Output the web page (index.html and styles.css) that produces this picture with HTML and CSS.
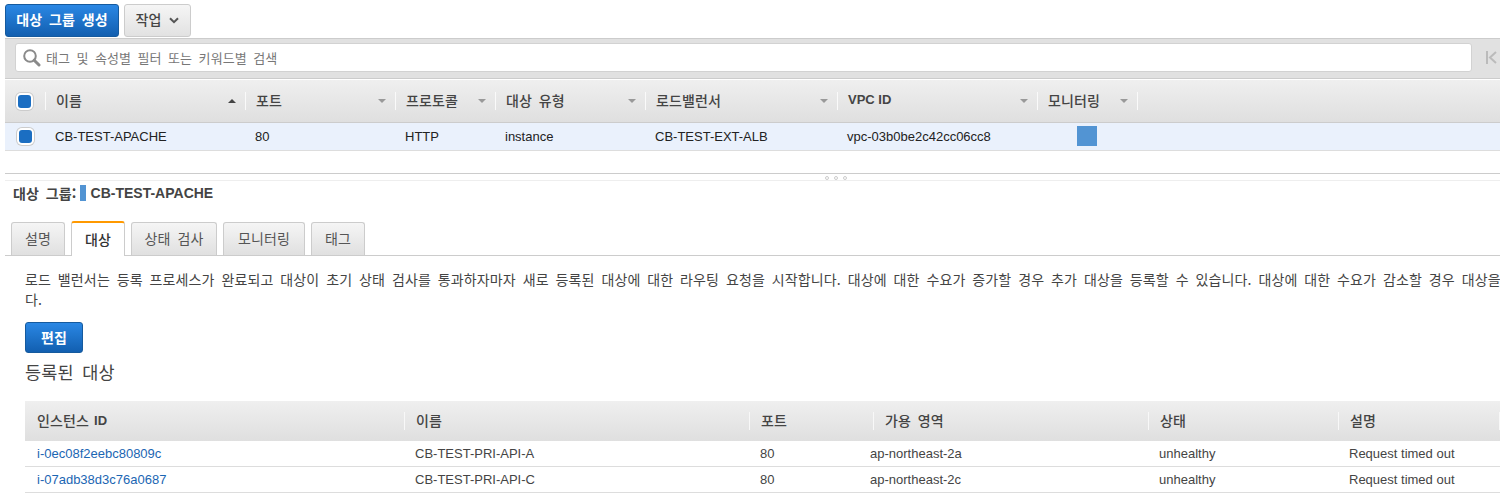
FILE: index.html
```html
<!DOCTYPE html>
<html lang="ko">
<head>
<meta charset="utf-8">
<title>대상 그룹</title>
<link rel="stylesheet" href="styles.css">
</head>
<body>
<div class="toolbar">
  <button class="btn primary create ko">대상 그룹 생성</button>
  <button class="btn secondary ko">작업 <svg class="chev" width="10" height="7" viewBox="0 0 10 7"><path d="M1 1.2 L5 5.2 L9 1.2" fill="none" stroke="#555" stroke-width="2"/></svg></button>
</div>
<div class="filterbar">
  <div class="search">
    <svg class="mag" width="19" height="19" viewBox="0 0 19 19"><circle cx="8" cy="8" r="5.8" fill="none" stroke="#8a8a8a" stroke-width="2"/><path d="M12.2 12.2 L17 17" stroke="#8a8a8a" stroke-width="3" stroke-linecap="round"/></svg>
    <span class="ko">태그 및 속성별 필터 또는 키워드별 검색</span>
  </div>
  <svg class="first" width="11" height="13" viewBox="0 0 11 13"><path d="M1 0 V13" stroke="#bbb" stroke-width="2"/><path d="M10 1 L4 6.5 L10 12" fill="none" stroke="#bbb" stroke-width="2"/></svg>
</div>
<div class="grid head">
  <div class="cell check"><i class="box"></i></div>
  <div class="cell c1"><span class="ko">이름</span><b class="tri up"></b></div>
  <div class="cell c2"><span class="ko">포트</span><b class="tri"></b></div>
  <div class="cell c3"><span class="ko">프로토콜</span><b class="tri"></b></div>
  <div class="cell c4"><span class="ko">대상 유형</span><b class="tri"></b></div>
  <div class="cell c5"><span class="ko">로드밸런서</span><b class="tri"></b></div>
  <div class="cell c6"><strong>VPC ID</strong><b class="tri"></b></div>
  <div class="cell c7"><span class="ko">모니터링</span><b class="tri"></b></div>
</div>
<div class="grid row">
  <div class="cell check"><i class="box"></i></div>
  <div class="cell c1">CB-TEST-APACHE</div>
  <div class="cell c2">80</div>
  <div class="cell c3">HTTP</div>
  <div class="cell c4">instance</div>
  <div class="cell c5">CB-TEST-EXT-ALB</div>
  <div class="cell c6">vpc-03b0be2c42cc06cc8</div>
  <div class="cell c7"><i class="swatch"></i></div>
</div>
<div class="splitter"><span class="dots"><i></i><i></i><i></i></span></div>
<div class="title"><span class="label ko">대상 그룹:</span><i class="flag"></i><strong>CB-TEST-APACHE</strong></div>
<div class="tabs">
  <div class="tab t1 ko">설명</div>
  <div class="tab active t2 ko">대상</div>
  <div class="tab t3 ko">상태 검사</div>
  <div class="tab t4 ko">모니터링</div>
  <div class="tab t5 ko">태그</div>
</div>
<div class="content">
  <p class="desc ko">로드 밸런서는 등록 프로세스가 완료되고 대상이 초기 상태 검사를 통과하자마자 새로 등록된 대상에 대한 라우팅 요청을 시작합니다. 대상에 대한 수요가 증가할 경우 추가 대상을 등록할 수 있습니다. 대상에 대한 수요가 감소할 경우 대상을 등록 취소할 수 있습니다.</p>
  <button class="btn primary edit ko">편집</button>
  <h2 class="ko">등록된 대상</h2>
  <div class="tgrid thead">
    <div class="th th-first"><span class="ko">인스턴스</span><strong>ID</strong></div><div class="th"><span class="ko">이름</span></div><div class="th"><span class="ko">포트</span></div><div class="th"><span class="ko">가용 영역</span></div><div class="th"><span class="ko">상태</span></div><div class="th"><span class="ko">설명</span></div>
  </div>
  <div class="tgrid tr">
    <div><a href="#">i-0ec08f2eebc80809c</a></div><div>CB-TEST-PRI-API-A</div><div>80</div><div class="az">ap-northeast-2a</div><div>unhealthy</div><div>Request timed out</div>
  </div>
  <div class="tgrid tr">
    <div><a href="#">i-07adb38d3c76a0687</a></div><div>CB-TEST-PRI-API-C</div><div>80</div><div class="az">ap-northeast-2c</div><div>unhealthy</div><div>Request timed out</div>
  </div>
</div>
</body>
</html>
```
FILE: styles.css
```css
* { box-sizing: border-box; }
html, body { margin: 0; padding: 0; width: 1500px; height: 502px; overflow: hidden; background: #fff; }
body { font-family: "Liberation Sans", "Noto Sans CJK KR", sans-serif; font-size: 13px; color: #444; }
.ko { font-family: "Noto Sans CJK KR", "Liberation Sans", sans-serif; font-size: 14px; letter-spacing: .009em; word-spacing: .2em; }

.toolbar { display: flex; gap: 5px; padding: 4px 0 0 5px; height: 38px; }
.btn { border-radius: 3px; padding: 0; cursor: pointer; }
.primary { background: linear-gradient(#2a87e4, #125fb0); border: 1px solid #155a9e; color: #fff; font-weight: bold; }
.secondary { background: linear-gradient(#f5f5f5, #e2e2e2); border: 1px solid #ccc; color: #444; width: 67px; height: 33px; font-weight: 500; padding-bottom: 3px; }
.create { width: 114px; height: 33px; padding-bottom: 3px; }
.chev { margin-left: 1px; vertical-align: 1px; }

.filterbar { margin-left: 5px; height: 41px; background: #e1e1e1; border-top: 1px solid #ccc; border-bottom: 1px solid #ccc; padding: 4px 0 0 10px; display: flex; align-items: flex-start; }
.search { width: 1457px; height: 29px; background: #fff; border: 1px solid #d2d2d2; border-radius: 3px; display: flex; align-items: center; padding-left: 6px; color: #777; }
.search span { margin-left: 5px; font-size: 13px; }
.first { margin: 8px 0 0 14px; }

.grid { margin-left: 5px; display: grid; grid-template-columns: 41px 200px 150px 100px 150px 192px 200px 100px; }
.head { height: 43px; margin-top: 1px; background: linear-gradient(#efefef, #dfdfdf); border-bottom: 1px solid #ccc; color: #444; }
.head .ko { font-weight: 500; }
.head .cell { position: relative; display: flex; align-items: center; height: 18px; margin-top: 12px; padding: 0 0 3px 10px; border-right: 1px solid #fafafa; }
.row { height: 28px; background: #eaf1fc; border-bottom: 1px solid #ddd; color: #222; }
.row .cell { display: flex; align-items: center; padding-left: 9px; }
.head .check { padding: 0 0 0 13px; }
.row .check { padding-left: 14px; }
.row .c7 { padding-left: 39px; align-items: flex-start; padding-top: 3px; }
.box { display: block; width: 13px; height: 13px; border-radius: 3px; background: #1b6ec2; box-shadow: 0 0 0 2px #fff, 0 0 0 3px #ccc; }
.swatch { display: block; width: 20px; height: 20px; background: #5294d3; }
.tri { position: absolute; right: 9px; top: 7px; width: 0; height: 0; border-left: 4px solid transparent; border-right: 4px solid transparent; border-top: 4px solid #999; }
.tri.up { border-top: 0; border-bottom: 4px solid #444; }

.splitter { margin: 22px 0 0 5px; height: 8px; border-top: 1px solid #ccc; border-bottom: 1px solid #eee; position: relative; }
.dots { position: absolute; left: 820px; top: 2px; display: flex; gap: 5px; }
.dots i { display: block; width: 4px; height: 4px; border: 1px solid #ccc; border-radius: 50%; background: #fff; }

.title { display: flex; align-items: center; height: 16px; margin: 4px 0 0 13px; color: #444; }
.label { font-weight: bold; }
.flag { width: 6px; height: 16px; background: #5294d3; margin: 0 5px 0 3px; }
.title strong { font-size: 14px; }

.tabs { margin: 21px 0 0 5px; height: 34px; display: flex; border-bottom: 1px solid #ccc; padding-left: 6px; gap: 6px; }
.tab { height: 33px; padding-bottom: 2px; background: linear-gradient(#f5f5f5, #e0e0e0); border: 1px solid #ccc; border-bottom: 0; border-radius: 3px 3px 0 0; display: flex; align-items: center; justify-content: center; color: #555; }
.t1 { width: 54px; }
.t2 { width: 54px; }
.t3 { width: 86px; }
.t4 { width: 82px; }
.t5 { width: 54px; }
.active { background: #fff; border-top: 2px solid #f90; color: #333; margin-top: -1px; height: 35px; font-weight: 500; }

.content { padding-left: 25px; width: 1500px; }
.desc { margin: 13px 0 0 0; width: 1634px; line-height: 20px; color: #444; word-break: break-all; }
.edit { display: block; width: 58px; height: 31px; margin-top: 13px; padding-bottom: 2px; }
h2.ko { margin: 6px 0 0 0; font-size: 17.5px; font-weight: normal; line-height: 26px; color: #444; }
.tgrid { display: grid; grid-template-columns: 380px 345px 124px 275px 190px 161px; width: 1475px; }
.thead { height: 40px; margin-top: 16px; background: linear-gradient(#efefef, #dfdfdf); color: #444; }
.thead .ko { font-weight: 500; }
.th { height: 18px; margin-top: 11px; padding: 0 0 2px 11px; border-right: 1px solid #f8f8f8; display: flex; align-items: center; }
.th-first { padding-left: 12px; gap: 5px; }
.tr { height: 26px; border-bottom: 1px solid #ddd; align-items: center; color: #444; }
.tr > div { padding-left: 10px; }
.tr > div:first-child { padding-left: 12px; }
.tr > .az { padding-left: 0; margin-left: -4px; }
a { color: #1b66b3; text-decoration: none; }
```
